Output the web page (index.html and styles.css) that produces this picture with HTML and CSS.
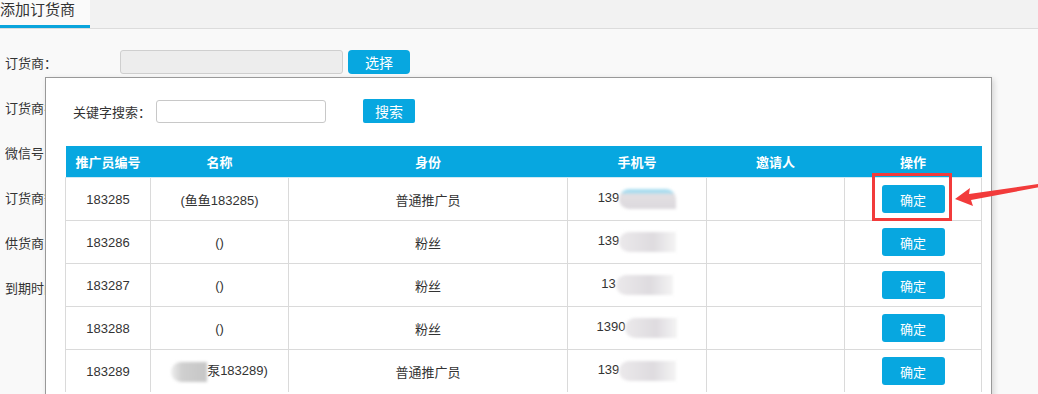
FILE: index.html
```html
<!DOCTYPE html>
<html lang="zh-CN">
<head>
    <meta charset="UTF-8">
    <title>添加订货商</title>
    <link rel="stylesheet" href="styles.css">
</head>
<body>
    <div class="tabs">
        <div class="tab active">添加订货商</div>
    </div>

    <div class="form">
        <div class="form-row">
            <label>订货商：</label>
            <input type="text" class="field" disabled>
            <button class="btn btn-select">选择</button>
        </div>
        <div class="form-row"><label>订货商名称：</label></div>
        <div class="form-row"><label>微信号：</label></div>
        <div class="form-row"><label>订货商等级：</label></div>
        <div class="form-row"><label>供货商：</label></div>
        <div class="form-row"><label>到期时间：</label></div>
    </div>

    <div class="modal">
        <div class="search-bar">
            <span class="search-label">关键字搜索：</span>
            <input type="text" class="search-input">
            <button class="btn btn-search">搜索</button>
        </div>
        <table class="list">
            <colgroup>
                <col style="width:85px">
                <col style="width:138px">
                <col style="width:279px">
                <col style="width:139px">
                <col style="width:138px">
                <col style="width:137px">
            </colgroup>
            <thead>
                <tr>
                    <th>推广员编号</th>
                    <th>名称</th>
                    <th>身份</th>
                    <th>手机号</th>
                    <th>邀请人</th>
                    <th>操作</th>
                </tr>
            </thead>
            <tbody>
                <tr>
                    <td>183285</td>
                    <td>(鱼鱼183285)</td>
                    <td>普通推广员</td>
                    <td>139<span class="blur blur-blue"></span></td>
                    <td></td>
                    <td class="op">
                        <button class="btn btn-ok">确定</button>
                        <span class="mark"></span>
                    </td>
                </tr>
                <tr>
                    <td>183286</td>
                    <td>()</td>
                    <td>粉丝</td>
                    <td>139<span class="blur"></span></td>
                    <td></td>
                    <td class="op"><button class="btn btn-ok">确定</button></td>
                </tr>
                <tr>
                    <td>183287</td>
                    <td>()</td>
                    <td>粉丝</td>
                    <td>13<span class="blur"></span></td>
                    <td></td>
                    <td class="op"><button class="btn btn-ok">确定</button></td>
                </tr>
                <tr>
                    <td>183288</td>
                    <td>()</td>
                    <td>粉丝</td>
                    <td>1390<span class="blur blur-short"></span></td>
                    <td></td>
                    <td class="op"><button class="btn btn-ok">确定</button></td>
                </tr>
                <tr>
                    <td>183289</td>
                    <td><span class="blur blur-name"></span>泵183289)</td>
                    <td>普通推广员</td>
                    <td>139<span class="blur"></span></td>
                    <td></td>
                    <td class="op"><button class="btn btn-ok">确定</button></td>
                </tr>
            </tbody>
        </table>
    </div>

    <svg class="arrow" width="90" height="30" viewBox="0 0 90 30">
        <polygon points="1,15 16,4 15,10 84,0 86,3 17,16 19,22" fill="#f23b3b"/>
    </svg>
</body>
</html>
```

FILE: styles.css
```css
body {
    margin: 0;
    height: 394px;
    overflow: hidden;
    font-family: "Liberation Sans", "Noto Sans CJK SC", sans-serif;
    font-size: 13px;
    color: #333;
    background-color: #f9f9f9;
}
.tabs {
    height: 28px;
    background-color: #f2f2f2;
    border-bottom: 1px solid #dcdcdc;
}
.tab {
    width: 90px;
    height: 25px;
    font-size: 15px;
    line-height: 20px;
    background-color: #fafafa;
    border-bottom: 3px solid #0aa4dc;
    white-space: nowrap;
}
.form {
    padding: 21px 0 0 5px;
}
.form-row {
    display: flex;
    align-items: center;
    height: 24px;
    margin-bottom: 21px;
}
.form-row label {
    width: 115px;
    white-space: nowrap;
    overflow: hidden;
}
.field {
    box-sizing: border-box;
    width: 223px;
    height: 24px;
    margin: 0;
    background-color: #ededed;
    border: 1px solid #cfcfcf;
    border-radius: 3px;
}
.btn {
    border: none;
    margin: 0;
    padding: 0;
    color: #fff;
    background-color: #07a7e0;
    font-family: inherit;
    font-size: 13px;
    border-radius: 3px;
    cursor: pointer;
}
.btn-select {
    width: 62px;
    height: 24px;
    margin-left: 5px;
    font-size: 14px;
    border-radius: 4px;
}
.modal {
    position: absolute;
    left: 45px;
    top: 77px;
    width: 945px;
    height: 330px;
    background-color: #fff;
    border: 1px solid #999;
    box-shadow: 2px 2px 6px rgba(0,0,0,0.15);
}
.search-bar {
    display: flex;
    align-items: center;
    height: 24px;
    margin: 21px 0 0 27px;
}
.search-label {
    width: 83px;
    white-space: nowrap;
}
.search-input {
    box-sizing: border-box;
    width: 170px;
    height: 23px;
    margin: 0;
    border: 1px solid #c8c8c8;
    border-radius: 3px;
}
.btn-search {
    width: 52px;
    height: 24px;
    margin-left: 37px;
    font-size: 14px;
    border-radius: 2px;
}
.list {
    margin: 23px 0 0 19px;
    width: 916px;
    table-layout: fixed;
    border-collapse: collapse;
}
.list th {
    height: 31px;
    padding: 0;
    background-color: #07a7e0;
    color: #fff;
    font-weight: bold;
    border-bottom: 1px solid #cfe9f3;
}
.list td {
    height: 42px;
    padding: 0;
    text-align: center;
    border: 1px solid #dadada;
    white-space: nowrap;
}
.list tbody tr:last-child td {
    border-bottom: none;
}
.blur {
    display: inline-block;
    width: 57px;
    height: 20px;
    vertical-align: middle;
    background: linear-gradient(90deg, #ebe9eb, #dedbdf 60%, #f4f4f4);
    border-radius: 10px 0 0 10px;
    filter: blur(1.5px);
}
.blur-blue {
    background: linear-gradient(180deg, #a8dcef 0, #a8dcef 20%, #e2dfe2 25%, #dcd9dd);
    border-radius: 12px 12px 0 12px;
}
.blur-short {
    width: 52px;
}
.blur-name {
    width: 36px;
    background: linear-gradient(90deg, #eeeeee, #cfcfcf 30%, #c6c6c6);
}
.op {
    position: relative;
}
.btn-ok {
    width: 63px;
    height: 28px;
    vertical-align: middle;
}
.mark {
    position: absolute;
    left: 27px;
    top: -5px;
    width: 74px;
    height: 42px;
    border: 3px solid #f23b3b;
}
.arrow {
    position: absolute;
    left: 954px;
    top: 184px;
}
```
